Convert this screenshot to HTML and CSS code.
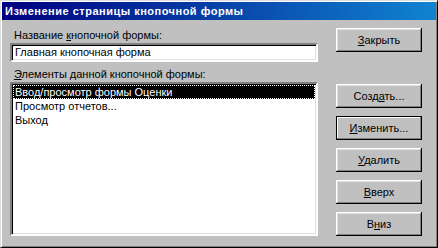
FILE: index.html
```html
<!DOCTYPE html>
<html>
<head>
    <meta charset="utf-8">
    <title>Изменение страницы кнопочной формы</title>
    <link rel="stylesheet" href="styles.css">
</head>
<body>
    <div class="window">
        <div class="title-bar">Изменение страницы кнопочной формы</div>

        <div class="content">
            <div class="left-col">
                <label class="field-label" for="page-name">Название <u>к</u>нопочной формы:</label>
                <div class="text-box" id="page-name">Главная кнопочная форма</div>

                <label class="field-label list-label"><u>Э</u>лементы данной кнопочной формы:</label>
                <div class="list-box">
                    <div class="list-item selected">Ввод/просмотр формы Оценки</div>
                    <div class="list-item">Просмотр отчетов...</div>
                    <div class="list-item">Выход</div>
                </div>
            </div>

            <div class="right-col">
                <button type="button" class="btn"><u>З</u>акрыть</button>
                <button type="button" class="btn btn-first">Созд<u>а</u>ть...</button>
                <button type="button" class="btn btn-default"><u>И</u>зменить...</button>
                <button type="button" class="btn"><u>У</u>далить</button>
                <button type="button" class="btn"><u>В</u>верх</button>
                <button type="button" class="btn">В<u>н</u>из</button>
            </div>
        </div>
    </div>
</body>
</html>
```
FILE: styles.css
```css
html, body {
    margin: 0;
    padding: 0;
    background: #c0c0c0;
}

body {
    font-family: "Liberation Sans", Arial, sans-serif;
    font-size: 11px;
    color: #000;
}

u {
    text-decoration: underline;
    text-underline-offset: 1px;
}

.window {
    width: 438px;
    height: 248px;
    box-sizing: border-box;
    background: #c0c0c0;
    border: 1px solid;
    border-color: #dfdfdf #000 #000 #dfdfdf;
    box-shadow: inset 1px 1px #fff, inset -1px -1px #808080;
    padding: 2px 1px 1px 1px;
    display: flex;
    flex-direction: column;
}

.title-bar {
    height: 18px;
    line-height: 18px;
    padding-left: 3px;
    margin-top: -1px;
    background: linear-gradient(to right, #000080, #1084d0);
    color: #fff;
    font-weight: bold;
    letter-spacing: 0.5px;
    white-space: nowrap;
}

.content {
    display: flex;
    padding-left: 8px;
}

.left-col {
    width: 308px;
    display: flex;
    flex-direction: column;
}

.field-label {
    display: block;
    line-height: 13px;
    height: 13px;
    margin-top: 9px;
    padding-left: 4px;
    white-space: nowrap;
}

.list-label {
    margin-top: 6px;
}

.text-box,
.list-box {
    background: #fff;
    border: 2px solid;
    border-color: #808080 #fff #fff #808080;
    box-shadow: inset 1px 1px #000, inset -1px -1px #dfdfdf;
    box-sizing: border-box;
}

.text-box {
    margin-top: 1px;
    height: 19px;
    line-height: 15px;
    padding: 0 3px;
    white-space: nowrap;
}

.list-box {
    margin-top: 1px;
    height: 154px;
    padding: 1px 1px;
}

.list-item {
    height: 14px;
    line-height: 14px;
    padding-left: 2px;
    white-space: nowrap;
}

.list-item.selected {
    background: #000;
    color: #fff;
    outline: 1px dotted #fff;
    outline-offset: -1px;
}

.right-col {
    display: flex;
    flex-direction: column;
    margin-left: 18px;
    padding-top: 8px;
}

.btn {
    width: 86px;
    height: 24px;
    margin: 0 0 8px 0;
    padding: 0;
    border: none;
    background: #c0c0c0;
    font-family: inherit;
    font-size: 11px;
    color: #000;
    box-shadow: inset -1px -1px #000, inset 1px 1px #fff, inset -2px -2px #808080, inset 2px 2px #dfdfdf;
}

.btn-first {
    margin-top: 24px;
}

.btn-default {
    box-shadow: inset 0 0 0 1px #000, inset -2px -2px #808080, inset 2px 2px #fff;
}
```
